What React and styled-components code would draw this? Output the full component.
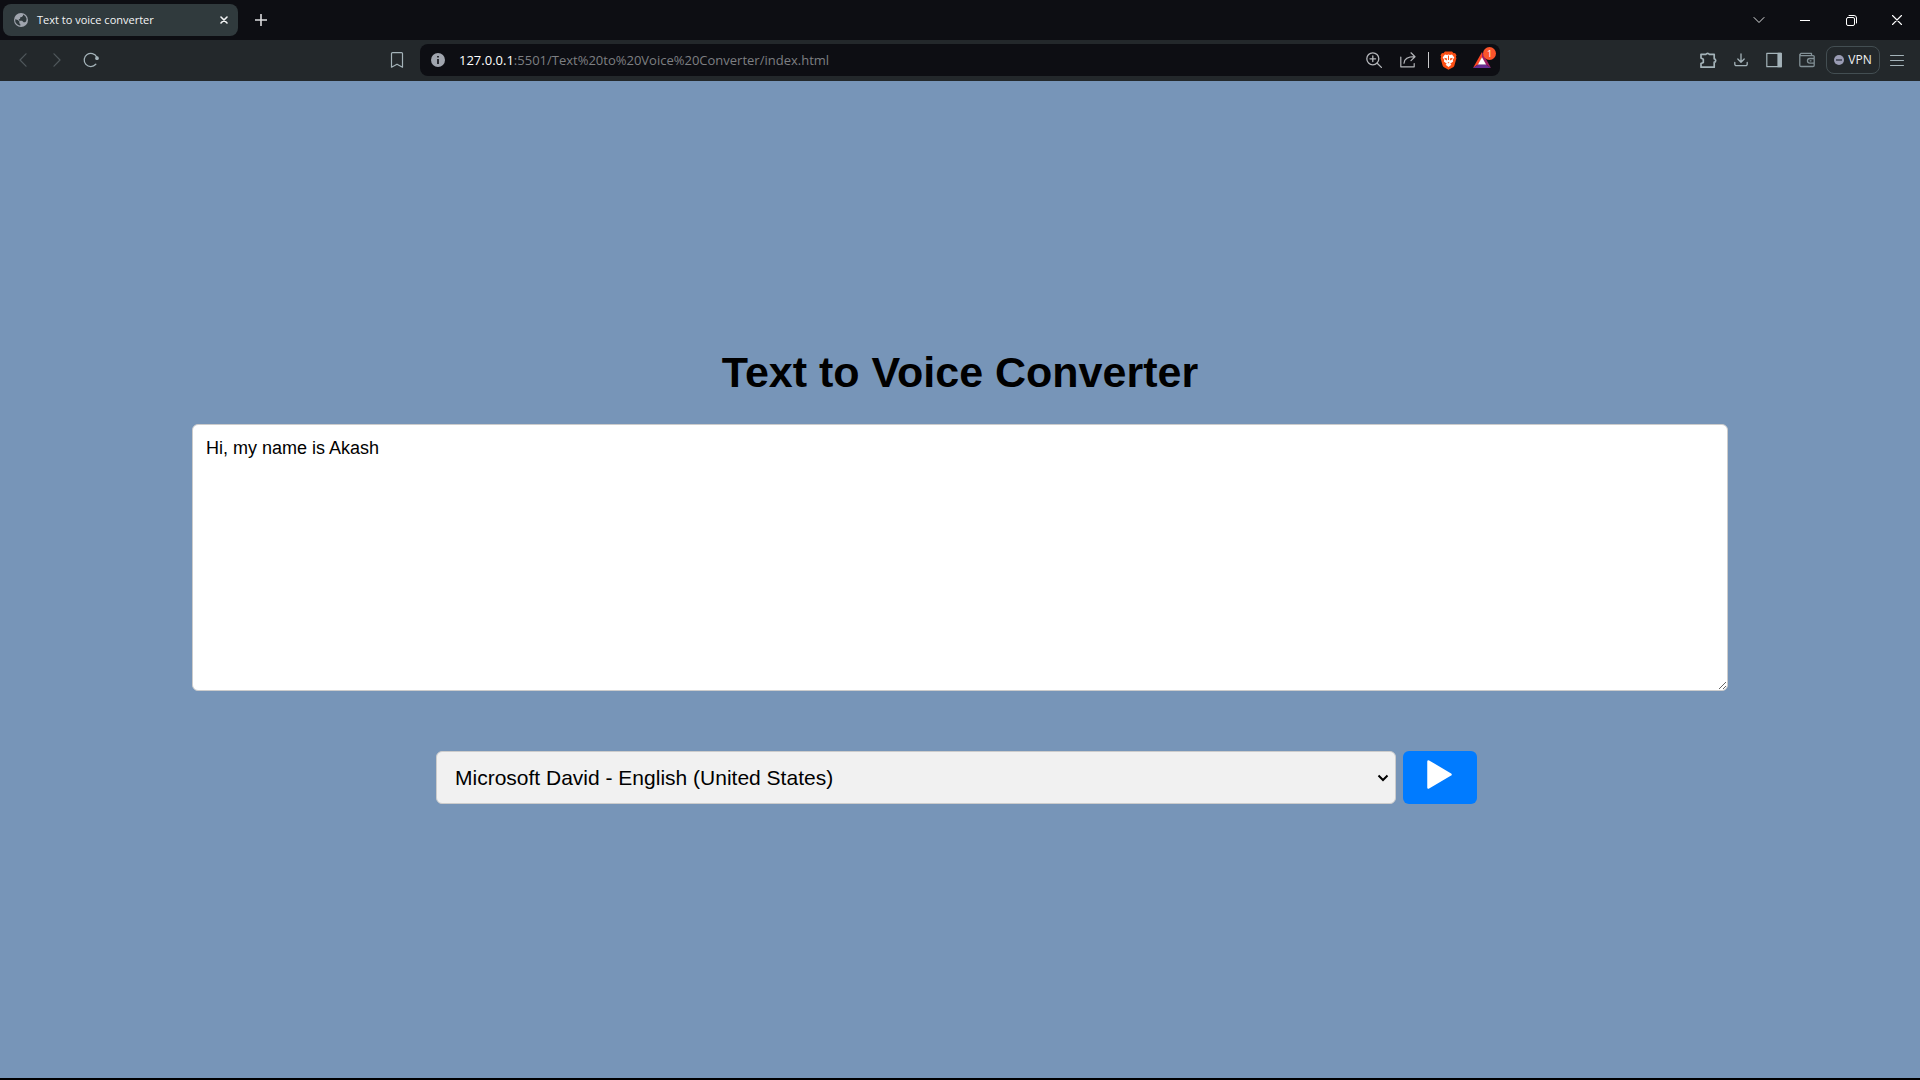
import React, { useState } from "react";
import styled, { createGlobalStyle } from "styled-components";

const GlobalStyle = createGlobalStyle`
  *, *::before, *::after { box-sizing: border-box; }
  html, body { margin: 0; padding: 0; background: #000; }
  button, input, select, textarea { font: inherit; color: inherit; margin: 0; }
`;

const uiFont = `"Open Sans", "Noto Sans", sans-serif`;
const pageFont = `"Liberation Sans", Arial, sans-serif`;

const Window = styled.div`
  display: flex;
  flex-direction: column;
  min-height: 100vh;
  padding-bottom: 2px;
  background: #000;
  font-family: ${uiFont};
`;

const TabStrip = styled.header`
  display: flex;
  align-items: center;
  height: 40px;
  padding-left: 3px;
  background: #0d0e13;
`;

const Tab = styled.div`
  display: flex;
  align-items: center;
  width: 235px;
  height: 32px;
  padding: 0 4px 0 11px;
  border-radius: 8px;
  background: #303a3d;
`;

const TabTitle = styled.span`
  flex: 1;
  margin-left: 9px;
  font-size: 11px;
  line-height: 16px;
  white-space: nowrap;
  color: #f3f4f5;
`;

const IconButton = styled.button`
  display: flex;
  align-items: center;
  justify-content: center;
  flex: none;
  width: ${(p) => p.$width || 32}px;
  height: ${(p) => p.$height || 32}px;
  padding: 0;
  border: 0;
  background: transparent;
  color: ${(p) => p.$color || "#a4b3b9"};
`;

const WindowControls = styled.div`
  display: flex;
  margin-left: auto;
`;

const Toolbar = styled.nav`
  display: flex;
  align-items: center;
  padding: 4px 0 5px;
  background: #23282b;
`;

const ToolbarStart = styled.div`
  display: flex;
  align-items: center;
  gap: 2px;
  flex: 0 0 420px;
  padding: 0 7px;
`;

const ToolbarEnd = styled.div`
  display: flex;
  align-items: center;
  justify-content: flex-end;
  gap: 1px;
  flex: 0 0 420px;
  padding-right: 7px;
`;

const Spacer = styled.div`
  flex: 1;
`;

const AddressBar = styled.div`
  display: flex;
  align-items: center;
  flex: 1;
  min-width: 0;
  height: 32px;
  padding-left: 2px;
  border-radius: 8px;
  background: #0d0e13;
`;

const UrlFields = styled.div`
  display: flex;
  flex: 1;
  min-width: 0;
  padding-left: 5px;
`;

const UrlInput = styled.input`
  ${(p) => (p.$fill ? "flex: 1; min-width: 0;" : "flex: none; field-sizing: content;")}
  height: 24px;
  padding: 0;
  border: 0;
  outline: 0;
  background: transparent;
  font-size: 13px;
  line-height: 24px;
  color: ${(p) => (p.$fill ? "#7d7f82" : "#ffffff")};
`;

const Divider = styled.span`
  width: 1px;
  height: 16px;
  margin: 0 3px;
  background: #c9cacc;
`;

const BadgeAnchor = styled.span`
  position: relative;
  display: flex;
`;

const Badge = styled.span`
  position: absolute;
  top: -5px;
  right: -5px;
  width: 13px;
  height: 13px;
  border-radius: 50%;
  background: #fb542b;
  color: #fff;
  font-size: 9px;
  line-height: 13px;
  text-align: center;
`;

const VpnButton = styled.button`
  display: flex;
  align-items: center;
  justify-content: center;
  gap: 4px;
  width: 54px;
  height: 28px;
  margin-left: 2px;
  padding: 0;
  border: 1px solid #434e52;
  border-radius: 8px;
  background: transparent;
  color: #f0f1f2;
  font-size: 12px;
  line-height: 16px;
`;

const Page = styled.main`
  display: flex;
  flex: 1;
  flex-direction: column;
  align-items: center;
  justify-content: center;
  padding-bottom: 10px;
  background: #7795b8;
  font-family: ${pageFont};
  color: #000;
`;

const Title = styled.h1`
  margin: 0 0 25px;
  font-size: 43px;
  line-height: 54px;
  font-weight: 700;
`;

const TextBox = styled.textarea`
  display: block;
  width: 80%;
  height: 267px;
  margin-bottom: 60px;
  padding: 12px 13px;
  border: 1px solid #ccc;
  border-radius: 6px;
  outline: 0;
  background: #fff;
  font-size: 18px;
  line-height: 22px;
  resize: both;
`;

const Controls = styled.div`
  display: flex;
  justify-content: center;
  gap: 7px;
  width: 100%;
  padding-right: 7px;
`;

const SelectWrap = styled.div`
  position: relative;
  width: 50vw;
`;

const VoiceSelect = styled.select`
  appearance: none;
  display: block;
  width: 100%;
  height: 53px;
  padding: 0 18px;
  border: 1px solid #ccc;
  border-radius: 6px;
  outline: 0;
  background: #f1f1f1;
  font-size: 21px;
`;

const SelectArrow = styled.svg`
  position: absolute;
  top: 23px;
  right: 7px;
  pointer-events: none;
`;

const PlayButton = styled.button`
  display: flex;
  align-items: flex-start;
  width: 74px;
  height: 53px;
  padding: 9px 0 0 24px;
  border: 0;
  border-radius: 6px;
  background: #007bff;
`;

const Line = ({ size = 16, w = 1.2, children, ...rest }) => (
  <svg width={size} height={size} viewBox={`0 0 ${size} ${size}`} fill="none" stroke="currentColor"
    strokeWidth={w} strokeLinecap="round" strokeLinejoin="round" aria-hidden="true" {...rest}>
    {children}
  </svg>
);

const Globe = () => (
  <svg width="14" height="14" viewBox="0 0 14 14" aria-hidden="true">
    <circle cx="7" cy="7" r="7" fill="#a0a5ae" />
    <path d="M1.2 6.2 3.8 7l1.7 1.7-.3 1.5 1.1.7v1.8A5.7 5.7 0 0 1 1.2 6.2ZM9 1.600v1.200L7.9 4 6.300 4.300l-.2 1.500-1.500.7.8 1.200h2.700l1.500 1.500 1.400.1 1-.7A5.700 5.700 0 0 0 12.500 5.500 5.700 5.700 0 0 0 9 1.600Z" fill="#303a3d" />
  </svg>
);

const BraveLion = () => (
  <svg width="17" height="19" viewBox="0 0 17 19" aria-hidden="true">
    <path d="M5 .5h7l1.700 1.700 1.300-.2 1.500 2.300-.6 1.500.5 1.400-2 7.200c-.3 1-1 1.600-1.800 2.100L8.500 18.800l-4.100-2.300c-.8-.5-1.500-1.100-1.800-2.100l-2-7.200.5-1.400L.5 4.300 2 2l1.300.2L5 .5Z" fill="#fb4f14" />
    <path d="m5 3.500 2 .5 1.500-.4 1.500.4 2-.5 2.300 2.900-1.500 2.400.3 1.700-2.900 2.200 1.200 1.100L8.500 16l-2.900-2.200 1.200-1.100-2.900-2.200.3-1.700-1.500-2.400L5 3.500Z" fill="#fff" />
    <path d="m4.300 6.800 2.900.7-.5 2-1.900-1.300ZM12.700 6.800l-2.900.7.5 2 1.900-1.300ZM7.500 11.300h2l-1 1.100ZM8 4.500h1V9H8Z" fill="#fb4f14" />
  </svg>
);

const BatTriangle = () => (
  <svg width="18" height="16" viewBox="0 0 18 16" aria-hidden="true">
    <path d="M9 0 0 16l5.300-3.800L9 6Z" fill="#ff4724" />
    <path d="m0 16 5.300-3.800h7.400L18 16Z" fill="#662d91" />
    <path d="m9 0 9 16-5.300-3.800L9 6Z" fill="#9e1f63" />
    <path d="m9 5.300 4.100 7.100H4.900Z" fill="#fff" />
  </svg>
);

export default function App() {
  const [text, setText] = useState("Hi, my name is Akash");

  return (
    <Window>
      <GlobalStyle />
      <TabStrip>
        <Tab>
          <Globe />
          <TabTitle>Text to voice converter</TabTitle>
          <IconButton $width={20} $height={20} $color="#f3f4f5" aria-label="Close tab">
            <Line size={8} w={1.6}><path d="m1 1 6 6M7 1 1 7" /></Line>
          </IconButton>
        </Tab>
        <IconButton $width={46} $color="#dcdddf" aria-label="New tab">
          <Line size={12} w={1.6}><path d="M6 .5v11M.5 6h11" /></Line>
        </IconButton>
        <WindowControls>
          <IconButton $width={46} $color="#dcdddf" aria-label="Search tabs">
            <Line size={12} w={1}><path d="m1 3.500 5 5 5-5" /></Line>
          </IconButton>
          <IconButton $width={46} $color="#fff" aria-label="Minimize">
            <Line size={10} w={1}><path d="M0 5.500h10" /></Line>
          </IconButton>
          <IconButton $width={46} $color="#fff" aria-label="Restore">
            <Line size={11} w={1}>
              <rect x=".5" y="2.500" width="8" height="8" rx="1.500" />
              <path d="M3 .5h5a2.500 2.500 0 0 1 2.500 2.500v5" />
            </Line>
          </IconButton>
          <IconButton $width={46} $color="#fff" aria-label="Close">
            <Line size={10} w={1.1}><path d="m.5.5 9 9M9.500.5l-9 9" /></Line>
          </IconButton>
        </WindowControls>
      </TabStrip>

      <Toolbar>
        <ToolbarStart>
          <IconButton $color="#50585c" aria-label="Back">
            <Line size={14}><path d="M10 .8 4 7l6 6.200" /></Line>
          </IconButton>
          <IconButton $color="#50585c" aria-label="Forward">
            <Line size={14}><path d="m4 .8 6 6.200-6 6.200" /></Line>
          </IconButton>
          <IconButton aria-label="Reload">
            <Line size={16} w={1.3}>
              <path d="M12.800 12.300A6.600 6.600 0 1 1 13.700 5" />
              <circle cx="14" cy="6.200" r="1.200" fill="currentColor" />
            </Line>
          </IconButton>
          <Spacer />
          <IconButton aria-label="Bookmark">
            <Line size={16}><path d="M3.500.6h9a1 1 0 0 1 1 1v13.600L8 12.200l-5.500 3V1.600a1 1 0 0 1 1-1Z" /></Line>
          </IconButton>
        </ToolbarStart>

        <AddressBar>
          <IconButton $color="#a0a5ae" aria-label="Site information">
            <svg width="14" height="14" viewBox="0 0 14 14" aria-hidden="true">
              <circle cx="7" cy="7" r="7" fill="currentColor" />
              <path d="M6.200 3h1.600v1.600H6.200ZM6.200 6h1.600v5H6.200Z" fill="#0d0e13" />
            </svg>
          </IconButton>
          <UrlFields>
            <UrlInput aria-label="Host" defaultValue="127.0.0.1" />
            <UrlInput $fill aria-label="Path" defaultValue=":5501/Text%20to%20Voice%20Converter/index.html" />
          </UrlFields>
          <IconButton $color="#b4b6ba" $width={34} aria-label="Zoom">
            <Line size={16} w={1.3}><circle cx="6.800" cy="6.800" r="6" /><path d="m11.200 11.200 4.200 4.200M4 6.800h5.600M6.800 4v5.600" /></Line>
          </IconButton>
          <IconButton $color="#b4b6ba" $width={34} aria-label="Share">
            <Line size={16} w={1.2}><path d="M.8 5v9.800h13.400V11.500M4 11.200c.3-4 3-6.500 10.500-6.500M11 .8l4 3.900-4 3.900" /></Line>
          </IconButton>
          <Divider />
          <IconButton aria-label="Brave Shields"><BraveLion /></IconButton>
          <IconButton $width={36} aria-label="Brave Rewards">
            <BadgeAnchor><BatTriangle /><Badge>1</Badge></BadgeAnchor>
          </IconButton>
        </AddressBar>

        <ToolbarEnd>
          <IconButton aria-label="Extensions">
            <Line size={18} w={1.7}><path d="M2 3.300h5a1.700 1.500 0 0 1 3.200 0h5v4.500a1.500 1.700 0 0 1 0 3.400v5H2v-3.600l2.300-1.200V8.200L2 7Z" /></Line>
          </IconButton>
          <IconButton aria-label="Downloads">
            <Line size={14} w={1.3}><path d="M7 1v8M3.800 6 7 9.200 10.200 6M.8 9.500v1.700a1.500 1.500 0 0 0 1.500 1.500h9.400a1.500 1.500 0 0 0 1.500-1.500V9.500" /></Line>
          </IconButton>
          <IconButton aria-label="Sidebar">
            <Line size={16} w={1.2}><rect x=".8" y="1.300" width="14.400" height="13.400" /><path d="M12 1.300h3.200v13.400H12Z" fill="currentColor" /></Line>
          </IconButton>
          <IconButton $color="#829096" aria-label="Wallet">
            <Line size={16} w={1.3}><path d="M12.500 3.500V1.300H2a1.200 1.200 0 0 0 0 2.300h12.200a1 1 0 0 1 1 1v8.700a1.200 1.200 0 0 1-1.200 1.200H2A1.200 1.200 0 0 1 .8 13.300V2.500M15.200 6.500h-4.400a2.300 2.300 0 0 0 0 4.700h4.400M11.200 8.800h.8" /></Line>
          </IconButton>
          <VpnButton>
            <svg width="10" height="10" viewBox="0 0 10 10" aria-hidden="true">
              <circle cx="5" cy="5" r="5" fill="#9a9cb4" />
              <path d="M2 4.300h6v1.400H2Z" fill="#343947" />
            </svg>
            VPN
          </VpnButton>
          <IconButton aria-label="Menu">
            <Line size={14} w={1}><path d="M.5 2.500h13M.5 7.500h13M.5 12.500h13" /></Line>
          </IconButton>
        </ToolbarEnd>
      </Toolbar>

      <Page>
        <Title>Text to Voice Converter</Title>
        <TextBox
          aria-label="Text to read"
          spellCheck={false}
          value={text}
          onChange={(event) => setText(event.target.value)}
        />
        <Controls>
          <SelectWrap>
            <VoiceSelect aria-label="Voice">
              <option>Microsoft David - English (United States)</option>
            </VoiceSelect>
            <SelectArrow width="12" height="8" viewBox="0 0 12 8" fill="none" aria-hidden="true">
              <path d="m1.500 1.500 4.500 4.500 4.500-4.500" stroke="#000" strokeWidth="2" />
            </SelectArrow>
          </SelectWrap>
          <PlayButton aria-label="Play">
            <svg width="25" height="29" viewBox="0 0 25 29" aria-hidden="true">
              <path d="M1.500 1.500 23.500 14.500 1.500 27.500Z" fill="#fff" stroke="#fff" strokeWidth="2.500" strokeLinejoin="round" />
            </svg>
          </PlayButton>
        </Controls>
      </Page>
    </Window>
  );
}
